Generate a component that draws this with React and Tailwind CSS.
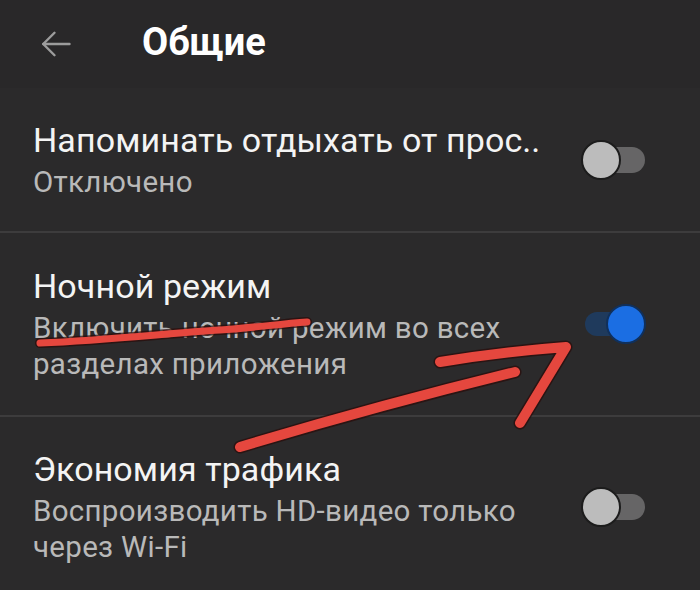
import React from 'react';

function Toggle({ on }) {
    if (on) {
        return (
            <div className="relative w-[66px] h-[40px] flex items-center">
                <div className="ml-[4px] w-[44px] h-[24px] rounded-full bg-[#1f3a5c]" />
                <div className="absolute right-[1px] top-0 w-[40px] h-[40px] rounded-full bg-[#1b6ee3] border-2 border-[#10305c]" />
            </div>
        );
    }
    return (
        <div className="relative w-[66px] h-[40px] flex items-center">
            <div className="ml-[18px] w-[46px] h-[26px] rounded-full bg-[#666566]" />
            <div className="absolute left-0 top-0 w-[40px] h-[40px] rounded-full bg-[#bcbcbc] border-2 border-[#1c1c1c]" />
        </div>
    );
}

function Row({ title, subtitle, on, height, border }) {
    return (
        <div className={`flex items-center justify-between pl-[33px] pr-[53px] ${height} ${border ? 'border-b-2 border-[#3d3c3d]' : ''}`}>
            <div className="flex flex-col">
                <div className="text-[34px] leading-[40px] tracking-[0.1px] text-[#f4f4f4] whitespace-nowrap">{title}</div>
                <div className="text-[29.5px] leading-[36px] tracking-[0.3px] text-[#b9b9b9] mt-[4px]">
                    {subtitle.map((line, i) => (
                        <div key={i} className="whitespace-nowrap">{line}</div>
                    ))}
                </div>
            </div>
            <Toggle on={on} />
        </div>
    );
}

export default function App() {
    return (
        <div className="relative w-[700px] h-[590px] overflow-hidden bg-[#2b2a2b] font-['Roboto',sans-serif]">
            <div className="h-[88px] flex items-center bg-[#292829]">
                <svg className="ml-[38px] w-[36px] h-[36px]" viewBox="0 0 24 24" fill="none" stroke="#9c9c9c" strokeWidth="1.6" strokeLinecap="round" strokeLinejoin="round">
                    <path d="M21 12H3.5" />
                    <path d="M11 4.5L3.5 12L11 19.5" />
                </svg>
                <h1 className="ml-[68px] text-[38px] font-bold text-white -mt-[4px]">Общие</h1>
            </div>

            <Row
                title="Напоминать отдыхать от прос.."
                subtitle={['Отключено']}
                height="h-[145px]"
                border
            />
            <Row
                title="Ночной режим"
                subtitle={['Включить ночной режим во всех', 'разделах приложения']}
                on
                height="h-[184px]"
                border
            />
            <Row
                title="Экономия трафика"
                subtitle={['Воспроизводить HD-видео только', 'через Wi-Fi']}
                height="h-[180px]"
            />

            <svg className="absolute inset-0 pointer-events-none" width="700" height="590" viewBox="0 0 700 590" fill="none" strokeLinecap="round" strokeLinejoin="round">
                <g stroke="#2a0b09" opacity="0.7">
                    <path d="M40 343 C 110 340, 170 333, 220 330 C 250 328, 280 324, 307 322" strokeWidth="10" />
                    <path d="M240 447 Q 380 405 515 372" strokeWidth="13" />
                    <path d="M440 362 Q 500 352 566 347 L 520 423" strokeWidth="13" />
                </g>
                <g stroke="#e5473e">
                    <path d="M40 343 C 110 340, 170 333, 220 330 C 250 328, 280 324, 307 322" strokeWidth="7" />
                    <path d="M240 447 Q 380 405 515 372" strokeWidth="10" />
                    <path d="M440 362 Q 500 352 566 347 L 520 423" strokeWidth="10" />
                </g>
            </svg>
        </div>
    );
}
